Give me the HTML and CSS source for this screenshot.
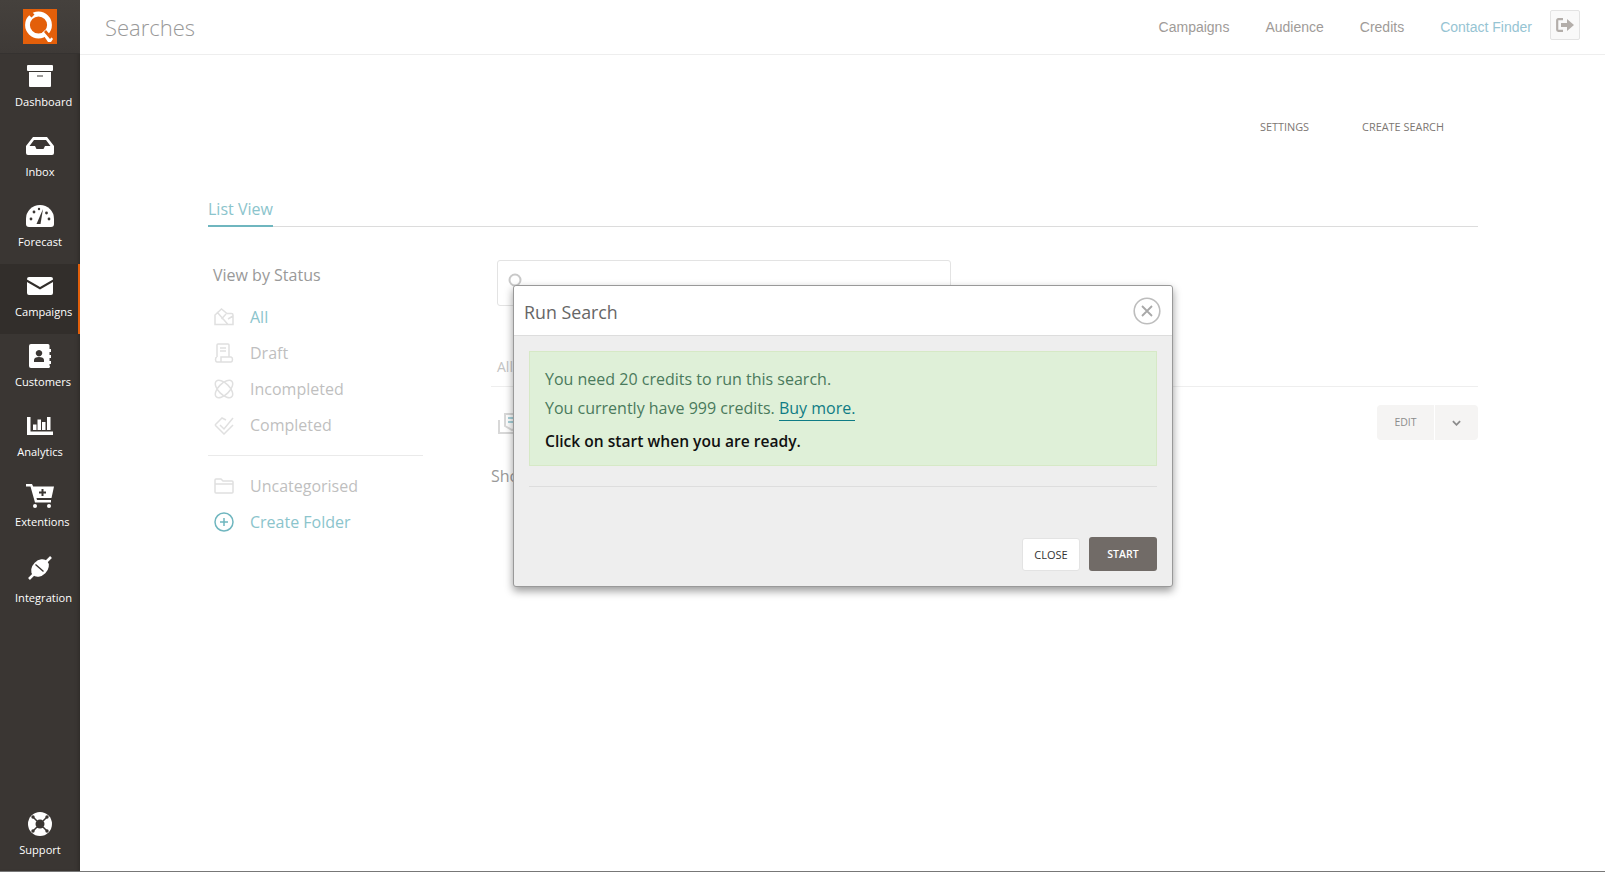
FILE: index.html
```html
<!DOCTYPE html>
<html lang="en">
<head>
<meta charset="utf-8">
<title>Searches</title>
<link rel="stylesheet" href="styles.css">
</head>
<body>
<div class="app">
  <aside class="sidebar">
    <div class="brand">
      <svg class="logo" viewBox="0 0 34 35"><rect width="34" height="35" fill="#e35f0a"/><circle cx="15.500" cy="16" r="11" fill="none" stroke="#fff" stroke-width="4.800"/><path d="M19 24l3-3 8 9-2 3h-3z" fill="#fff"/><path d="M5 5l3.500-2.500 3 3-3 3zM21 23l2-2 6 7-2 2z" fill="#e35f0a"/></svg>
    </div>
    <nav class="nav">
      <a class="nav-item"><span class="nav-icon"><svg width="26" height="22" viewBox="0 0 26 22"><path fill="#fff" d="M1 0h24a1 1 0 0 1 1 1v4a1 1 0 0 1-1 1H1a1 1 0 0 1-1-1V1a1 1 0 0 1 1-1zM2 7h22v14a1 1 0 0 1-1 1H3a1 1 0 0 1-1-1zM10 10.500v1h6v-1z" fill-rule="evenodd"/></svg></span><span class="nav-label">Dashboard</span></a>
      <a class="nav-item"><span class="nav-icon"><svg width="28" height="18" viewBox="0 0 28 18"><path fill="#fff" fill-rule="evenodd" d="M7 0h14l7 9v7a2 2 0 0 1-2 2H2a2 2 0 0 1-2-2V9zM8 3L3.500 9H9l1.500 3h7L19 9h5.500L20 3z"/></svg></span><span class="nav-label">Inbox</span></a>
      <a class="nav-item"><span class="nav-icon"><svg width="28" height="22" viewBox="0 0 28 22"><path fill="#fff" d="M14 0a14 14 0 0 1 14 14v5a3 3 0 0 1-3 3H3a3 3 0 0 1-3-3v-5A14 14 0 0 1 14 0z"/><g fill="#3a3633"><circle cx="5" cy="14" r="1.400"/><circle cx="8" cy="7" r="1.400"/><circle cx="13" cy="4" r="1.200"/><circle cx="23" cy="14" r="1.400"/><circle cx="20.500" cy="8" r="1.400"/><path d="M17 4l-2.500 15h-4z"/></g></svg></span><span class="nav-label">Forecast</span></a>
      <a class="nav-item is-active"><span class="nav-icon"><svg width="26" height="18" viewBox="0 0 26 18"><path fill="#fff" d="M2 0h22a2 2 0 0 1 2 2v.5L13 10 0 2.500V2a2 2 0 0 1 2-2zM0 5l13 7.500L26 5v11a2 2 0 0 1-2 2H2a2 2 0 0 1-2-2z"/></svg></span><span class="nav-label">Campaigns</span></a>
      <a class="nav-item"><span class="nav-icon"><svg width="22" height="24" viewBox="0 0 22 24"><path fill="#fff" fill-rule="evenodd" d="M2 0h17a1.500 1.500 0 0 1 1.500 1.500V5H22v3h-1.500v3H22v3h-1.500v3H22v3h-1.500v1.500A1.500 1.500 0 0 1 19 24H2a2 2 0 0 1-2-2V2a2 2 0 0 1 2-2zM10 6a3.200 3.200 0 1 0 .01 0zM5 18h10v-2c0-2-2-3-5-3s-5 1-5 3z"/></svg></span><span class="nav-label">Customers</span></a>
      <a class="nav-item"><span class="nav-icon"><svg width="26" height="18" viewBox="0 0 26 18"><path fill="#fff" d="M0 0h3.500v14.500H26V18H0zM6 7.500h3.500V13H6zM10.500 2.500H14V13h-3.500zM15 5h3.500v8H15zM20 0h3.500v13H20z"/></svg></span><span class="nav-label">Analytics</span></a>
      <a class="nav-item"><span class="nav-icon"><svg width="28" height="24" viewBox="0 0 28 24"><path fill="#fff" fill-rule="evenodd" d="M0 0h6l1.200 2.500H28l-2.500 11.500H10.500l.5 2H25v2.500H9L4.500 2.500H0zM15.500 5v2.500H13v2h2.500V12h2V9.500H20v-2h-2.500V5z"/><circle cx="9" cy="22" r="2" fill="#fff"/><circle cx="23" cy="22" r="2" fill="#fff"/></svg></span><span class="nav-label">Extentions</span></a>
      <a class="nav-item nav-item-tall"><span class="nav-icon"><svg width="26" height="26" viewBox="0 0 26 26"><g fill="#fff"><ellipse cx="13" cy="13" rx="10" ry="7.500" transform="rotate(-45 13 13)"/></g><path stroke="#fff" stroke-width="2.600" d="M19 7l5-5M7 19l-5 5"/><path stroke="#3a3633" stroke-width="1.400" d="M8.500 9.500l8 7"/></svg></span><span class="nav-label">Integration</span></a>
      <a class="nav-item nav-item-end"><span class="nav-icon"><svg width="24" height="24" viewBox="0 0 24 24"><circle cx="12" cy="12" r="12" fill="#fff"/><circle cx="12" cy="12" r="4.500" fill="#3a3633"/><g fill="#3a3633"><circle cx="5" cy="5" r="1.700"/><circle cx="19" cy="5" r="1.700"/><circle cx="5" cy="19" r="1.700"/><circle cx="19" cy="19" r="1.700"/></g><g stroke="#3a3633" stroke-width="1.500"><path d="M5 5l4 4M19 5l-4 4M5 19l4-4M19 19l-4-4"/></g></svg></span><span class="nav-label">Support</span></a>
    </nav>
  </aside>

  <div class="main">
    <header class="topbar">
      <h1 class="page-title">Searches</h1>
      <nav class="topnav">
        <a class="topnav-link">Campaigns</a>
        <a class="topnav-link">Audience</a>
        <a class="topnav-link">Credits</a>
        <a class="topnav-link is-current">Contact Finder</a>
      </nav>
      <button class="logout" aria-label="Log out"><svg width="18" height="14" viewBox="0 0 18 14"><path fill="none" stroke="#b3aeaa" stroke-width="2.200" d="M7 1.200H2.200a1 1 0 0 0-1 1v9.600a1 1 0 0 0 1 1H7"/><path fill="#b3aeaa" d="M5 5h6V1l7 6-7 6V9H5z"/></svg></button>
    </header>

    <div class="actions">
      <a class="action">SETTINGS</a>
      <a class="action">CREATE SEARCH</a>
    </div>

    <div class="content">
      <div class="tabs"><a class="tab">List View</a></div>
      <div class="columns">
        <section class="filters">
          <h2 class="filters-title">View by Status</h2>
          <ul class="filter-list">
            <li class="filter is-on"><svg class="filter-icon" viewBox="0 0 20 18"><path d="M1 16.500V7l6.500-6L13 5.500h4.500A1.500 1.500 0 0 1 19 7v9.500zM3 4l11 12.500M12 6L7.500 11M19 8l-5 3"/></svg>All</li>
            <li class="filter"><svg class="filter-icon" viewBox="0 0 20 20"><path d="M3 14V2a1 1 0 0 1 1-1h10a1 1 0 0 1 1 1v12M3 14c-2 .5-2 4.500 0 5h14c2-.5 2-4.500 0-5H7v5M6 5h6M6 8h6"/></svg>Draft</li>
            <li class="filter"><svg class="filter-icon" viewBox="0 0 20 20"><ellipse cx="10" cy="10" rx="11" ry="5.500" transform="rotate(45 10 10)"/><ellipse cx="10" cy="10" rx="11" ry="5.500" transform="rotate(-45 10 10)"/></svg>Incompleted</li>
            <li class="filter"><svg class="filter-icon" viewBox="0 0 20 20"><path d="M1 10l7-7 4 2M1 10l9 9 9-9M6 10l4 4 9-11"/></svg>Completed</li>
          </ul>
          <hr class="filters-rule">
          <ul class="filter-list">
            <li class="filter"><svg class="filter-icon" viewBox="0 0 20 18"><path d="M1 15V3a1 1 0 0 1 1-1h5l2 2h9a1 1 0 0 1 1 1v10a1 1 0 0 1-1 1H2a1 1 0 0 1-1-1zM1 7h18"/></svg>Uncategorised</li>
            <li class="filter is-add"><svg class="filter-icon" viewBox="0 0 20 20"><circle cx="10" cy="10" r="9"/><path d="M10 6v8M6 10h8"/></svg>Create Folder</li>
          </ul>
        </section>
        <section class="results">
          <div class="search-box"><svg class="search-icon" width="16" height="16" viewBox="0 0 16 16"><circle cx="7" cy="7" r="5.500" fill="none" stroke="#c9c9c9" stroke-width="2"/></svg></div>
          <div class="result-tabs">All</div>
          <div class="result-row">
            <svg class="result-icon" width="26" height="26" viewBox="0 0 26 26"><path fill="none" stroke="#d8d8d8" stroke-width="2" d="M2 10v13h22V10M8 4h14v12l-7 4-7-4z"/><path stroke="#a9d3dc" stroke-width="2" d="M11 8h8M11 12h8"/></svg>
            <div class="edit-group"><button class="edit-btn">EDIT</button><button class="edit-caret" aria-label="More"><svg width="9" height="6" viewBox="0 0 10 6"><path fill="none" stroke="#8c8c8c" stroke-width="2" d="M1 1l4 4 4-4"/></svg></button></div>
          </div>
          <div class="result-foot">Showing</div>
        </section>
      </div>
    </div>
  </div>
</div>

<div class="modal" role="dialog">
  <div class="modal-head">
    <h3 class="modal-title">Run Search</h3>
    <button class="modal-x" aria-label="Close"><svg width="28" height="28" viewBox="0 0 28 28"><circle cx="14" cy="14" r="12.800" fill="none" stroke="#bdbdbd" stroke-width="1.600"/><path stroke="#a8a8a8" stroke-width="1.800" d="M9 9l10 10M19 9L9 19"/></svg></button>
  </div>
  <div class="modal-body">
    <div class="alert">
      <p class="alert-line">You need 20 credits to run this search.</p>
      <p class="alert-line">You currently have 999 credits. <a class="alert-link">Buy more.</a></p>
      <p class="alert-strong">Click on start when you are ready.</p>
    </div>
    <hr class="modal-rule">
    <div class="modal-foot">
      <button class="btn btn-close">CLOSE</button>
      <button class="btn btn-start">START</button>
    </div>
  </div>
</div>
</body>
</html>
```
FILE: styles.css
```css
* { box-sizing: border-box; }
html, body { margin: 0; height: 100%; }
body { background: #fff; font-family: "Open Sans", sans-serif; color: #999; overflow: hidden; }
ul { list-style: none; margin: 0; padding: 0; }
h1, h2, h3, p { margin: 0; font-weight: 400; }
button { font-family: inherit; padding: 0; cursor: pointer; }

.app { display: flex; height: 872px; border-bottom: 1px solid #777; }

.sidebar { width: 80px; flex: none; display: flex; flex-direction: column; background: #3a3633; box-shadow: inset -4px 0 4px -3px rgba(0,0,0,.25); }
.brand { height: 54px; flex: none; padding: 9px 0 0 23px; background: linear-gradient(#45413d, #3e3a37); border-bottom: 1px solid #353230; }
.logo { display: block; width: 34px; height: 35px; }
.nav { flex: 1; display: flex; flex-direction: column; }
.nav-item { height: 70px; flex: none; display: flex; flex-direction: column; align-items: center; padding-top: 10px; }
.nav-item.is-active { background: #322e2b; border-right: 2px solid #e35f0a; padding-left: 2px; }
.nav-icon { height: 24px; display: flex; align-items: center; justify-content: center; }
.nav-label { display: block; width: 50px; margin-top: 6px; line-height: 16px; font-size: 11.100px; color: #fff; text-align: center; white-space: nowrap; }
.nav-item-tall { height: 76px; padding-top: 10px; }
.nav-item-tall .nav-icon { height: 28px; }
.nav-item-tall .nav-label { margin-top: 8px; }
.nav-item-end { margin-top: auto; height: auto; padding: 0 0 13px; }
.nav-item-end .nav-label { margin-top: 6px; }

.main { flex: 1; min-width: 0; display: flex; flex-direction: column; }
.topbar { height: 55px; flex: none; display: flex; align-items: center; padding: 0 25px 0 25px; border-bottom: 1px solid #eee; }
.page-title { font-size: 22px; font-weight: 300; color: #999; margin-top: -1px; }
.topnav { margin-left: auto; display: flex; gap: 36px; font-family: "Liberation Sans", Arial, sans-serif; font-size: 14px; color: #a09b98; }
.topnav-link.is-current { color: #96c4d3; }
.logout { width: 30px; height: 30px; margin-left: 18px; margin-top: -5px; background: #f9f9f9; border: 1px solid #e3e3e3; border-radius: 2px; display: flex; align-items: center; justify-content: center; }

.actions { display: flex; justify-content: flex-end; gap: 53px; padding: 64px 161px 0 0; font-size: 10.900px; line-height: 16px; color: #7d7773; }

.content { padding: 0 127px 0 128px; }
.tabs { margin-top: 58px; height: 34px; border-bottom: 1px solid #dcdcdc; display: flex; }
.tab { height: 34px; line-height: 33px; font-size: 16px; color: #8bc4cc; border-bottom: 2px solid #6fb6bf; }

.columns { display: flex; margin-top: 33px; }
.filters { width: 215px; flex: none; padding-top: 4px; }
.filters-title { font-size: 16px; line-height: 22px; padding-left: 5px; color: #999; }
.filter-list { padding-top: 13px; }
.filter { height: 36px; display: flex; align-items: center; gap: 16px; padding-left: 6px; font-size: 16px; color: #bfbfbf; }
.filter.is-on { color: #8bc4cc; }
.filter.is-add { color: #8bc4cc; }
.filter-icon { width: 20px; height: 20px; flex: none; fill: none; stroke: #e0e0e0; stroke-width: 1.500; }
.filter.is-add .filter-icon { stroke: #6fb6bf; }
.filters-rule { margin: 12px 0 0; border: 0; border-top: 1px solid #eaeaea; }
.filters-rule + .filter-list { padding-top: 12px; }

.results { flex: 1; margin-left: 68px; }
.search-box { width: 454px; height: 46px; margin-left: 6px; padding: 12px 0 0 10px; border: 1px solid #e3e3e3; border-radius: 3px; }
.search-icon { display: block; }
.result-tabs { margin-top: 50px; padding: 0 0 8px 6px; height: 31px; line-height: 22px; font-size: 14px; color: #c3c3c3; border-bottom: 1px solid #eee; }
.result-row { display: flex; justify-content: space-between; align-items: flex-start; padding: 18px 0 0 6px; height: 78px; }
.result-icon { margin-top: 5px; }
.edit-group { display: flex; height: 35px; background: #f5f4f3; border-radius: 4px; }
.edit-btn { width: 58px; border: 0; border-right: 1px solid #fff; background: none; font-size: 10.500px; color: #8c8c8c; padding-bottom: 2px; }
.edit-caret { width: 43px; border: 0; background: none; padding-bottom: 3px; }
.result-foot { font-size: 16px; line-height: 22px; color: #999; }

.modal { position: absolute; left: 513px; top: 285px; width: 660px; height: 302px; display: flex; flex-direction: column; background: #eee; border-radius: 3px; border: 1px solid #999; box-shadow: 0 4px 8px rgba(0,0,0,.4); }
.modal-head { height: 50px; flex: none; display: flex; align-items: center; justify-content: space-between; padding: 2px 11px 0 10px; background: #fff; border-bottom: 1px solid #ddd; border-radius: 3px 3px 0 0; }
.modal-title { font-size: 17.800px; color: #666; }
.modal-x { border: 0; background: none; display: flex; margin-top: -2px; }
.modal-body { flex: 1; padding: 15px 15px 0 15px; }
.alert { height: 115px; padding: 13px 15px 0; background: #dff0d8; border: 1px solid #d6e9c6; color: #4a7a5c; font-size: 16px; line-height: 29px; }
.alert-link { color: #0f7c85; border-bottom: 1px solid #0f7c85; padding-bottom: 1px; }
.alert-strong { color: #111; font-weight: 600; margin-top: 4px; font-size: 15.600px; }
.modal-rule { margin: 20px 0 0; border: 0; border-top: 1px solid #ddd; }
.modal-foot { display: flex; justify-content: flex-end; gap: 9px; margin-top: 51px; }
.btn { height: 33px; border-radius: 3px; font-size: 10.500px; }
.btn-close { width: 58px; background: #fff; border: 1px solid #e3e3e3; color: #333; font-size: 11px; }
.btn-start { width: 68px; height: 34px; margin-top: -1px; background: #716b67; border: 0; color: #fff; font-weight: 600; }
```
